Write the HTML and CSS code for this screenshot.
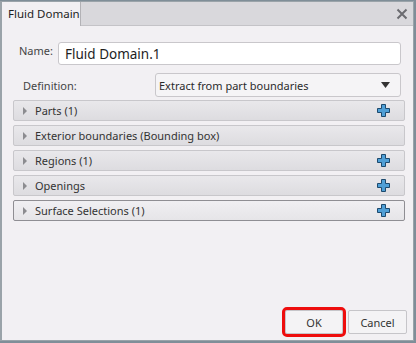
FILE: index.html
```html
<!DOCTYPE html>
<html>
<head>
<meta charset="utf-8">
<link rel="stylesheet" href="styles.css">
</head>
<body>
<div class="dialog">
  <div class="titlebar">
    <div class="tab">Fluid Domain</div>
    <div class="close">
      <svg width="12" height="12" viewBox="0 0 12 12"><path d="M1.5 1.5 L10.5 10.5 M10.5 1.5 L1.5 10.5" stroke="#6b6b70" stroke-width="2" fill="none"/></svg>
    </div>
  </div>
  <div class="content">
    <div class="name-row">
      <span class="lbl name-lbl">Name:</span>
      <div class="input">Fluid Domain.1</div>
    </div>
    <div class="def-row">
      <span class="lbl def-lbl">Definition:</span>
      <div class="select"><span>Extract from part boundaries</span>
        <svg width="9" height="6" viewBox="0 0 9 6"><path d="M0 0 H9 L4.5 6 Z" fill="#333"/></svg>
      </div>
    </div>
    <div class="sections">
      <div class="sec"><span class="tri"></span><span class="st">Parts (1)</span><svg class="plus" viewBox="0 0 13 13"><path d="M4.5 0.5 H8.5 V4.5 H12.5 V8.5 H8.5 V12.5 H4.5 V8.5 H0.5 V4.5 H4.5 Z" fill="#4f9fd6" stroke="#1d4a6e" stroke-width="1"/></svg></div>
      <div class="sec"><span class="tri"></span><span class="st">Exterior boundaries (Bounding box)</span></div>
      <div class="sec"><span class="tri"></span><span class="st">Regions (1)</span><svg class="plus" viewBox="0 0 13 13"><path d="M4.5 0.5 H8.5 V4.5 H12.5 V8.5 H8.5 V12.5 H4.5 V8.5 H0.5 V4.5 H4.5 Z" fill="#4f9fd6" stroke="#1d4a6e" stroke-width="1"/></svg></div>
      <div class="sec"><span class="tri"></span><span class="st">Openings</span><svg class="plus" viewBox="0 0 13 13"><path d="M4.5 0.5 H8.5 V4.5 H12.5 V8.5 H8.5 V12.5 H4.5 V8.5 H0.5 V4.5 H4.5 Z" fill="#4f9fd6" stroke="#1d4a6e" stroke-width="1"/></svg></div>
      <div class="sec focus"><span class="tri"></span><span class="st">Surface Selections (1)</span><svg class="plus" viewBox="0 0 13 13"><path d="M4.5 0.5 H8.5 V4.5 H12.5 V8.5 H8.5 V12.5 H4.5 V8.5 H0.5 V4.5 H4.5 Z" fill="#4f9fd6" stroke="#1d4a6e" stroke-width="1"/></svg></div>
    </div>
  </div>
  <div class="footer">
    <div class="btn ok">OK</div>
    <div class="btn cancel">Cancel</div>
  </div>
</div>
</body>
</html>
```
FILE: styles.css
```css
html, body {
  margin: 0;
  padding: 0;
}
body {
  width: 416px;
  height: 343px;
  background: #7f8e98;
  overflow: hidden;
  font-family: "Noto Sans", "Open Sans", sans-serif;
  font-size: 11px;
  color: #2b2b2b;
}
.dialog {
  box-sizing: border-box;
  margin: 1px 0 0 0;
  width: 414px;
  height: 340px;
  background: #f2f0f3;
  border: 1px solid #9aa3a9;
  border-left-width: 2px;
  display: flex;
  flex-direction: column;
}
.titlebar {
  height: 23px;
  flex: none;
  display: flex;
  background: #d9d8dc;
  border-bottom: 1px solid #c4c3c7;
}
.tab {
  width: 79px;
  box-sizing: border-box;
  padding: 4px 0 0 6px;
  background: #f2f0f3;
  border-right: 1px solid #b3b2b6;
  margin-bottom: -1px;
  white-space: nowrap;
  font-size: 11.5px;
  color: #1e1e1e;
}
.close {
  margin-left: auto;
  padding: 6px 5px 0 0;
}
.content {
  flex: 1;
  padding: 16px 0 0 11px;
}
.name-row {
  display: flex;
  align-items: flex-start;
  padding-left: 6px;
}
.lbl {
  color: #444;
  white-space: nowrap;
}
.name-lbl {
  width: 39px;
  padding-top: 1px;
}
.input {
  box-sizing: border-box;
  width: 343px;
  height: 23px;
  background: #fff;
  border: 1px solid #c9c7cb;
  border-radius: 3px;
  padding: 2px 0 0 6px;
  font-size: 13.5px;
  color: #1e1e1e;
}
.def-row {
  display: flex;
  align-items: center;
  margin-top: 8px;
  padding-left: 10px;
}
.def-lbl {
  width: 132px;
}
.select {
  box-sizing: border-box;
  width: 246px;
  height: 24px;
  background: #f5f4f6;
  border: 1px solid #c9c7cb;
  border-radius: 3px;
  display: flex;
  align-items: center;
  justify-content: space-between;
  padding: 0 10px 0 3px;
  color: #2b2b2b;
}
.sections {
  margin-top: 3px;
  width: 392px;
  display: flex;
  flex-direction: column;
  gap: 4px;
}
.sec {
  box-sizing: border-box;
  height: 21px;
  display: flex;
  align-items: center;
  background: linear-gradient(#e9e8eb, #dddce0);
  border: 1px solid #c8c7cb;
  border-radius: 2px;
  padding-left: 9px;
  color: #333;
}
.sec.focus {
  border-color: #8f8e93;
  background: linear-gradient(#f0eff2, #e6e5e8);
}
.tri {
  width: 0;
  height: 0;
  border-top: 4px solid transparent;
  border-bottom: 4px solid transparent;
  border-left: 4px solid #8c8c90;
  margin-right: 8px;
}
.st {
  flex: 1;
}
.plus {
  width: 13px;
  height: 13px;
  margin-right: 14px;
}
.footer {
  flex: none;
  display: flex;
  justify-content: flex-end;
  gap: 3px;
  padding: 0 6px 6px 0;
}
.btn {
  box-sizing: border-box;
  height: 24px;
  border: 1px solid #c6c5c9;
  border-radius: 2px;
  background: #f4f3f5;
  display: flex;
  align-items: center;
  justify-content: center;
  color: #333;
}
.cancel {
  width: 59px;
}
.btn.ok {
  width: 58px;
  margin-right: 2px;
  outline: 3px solid #ee0d0d;
  outline-offset: 0;
}
```
